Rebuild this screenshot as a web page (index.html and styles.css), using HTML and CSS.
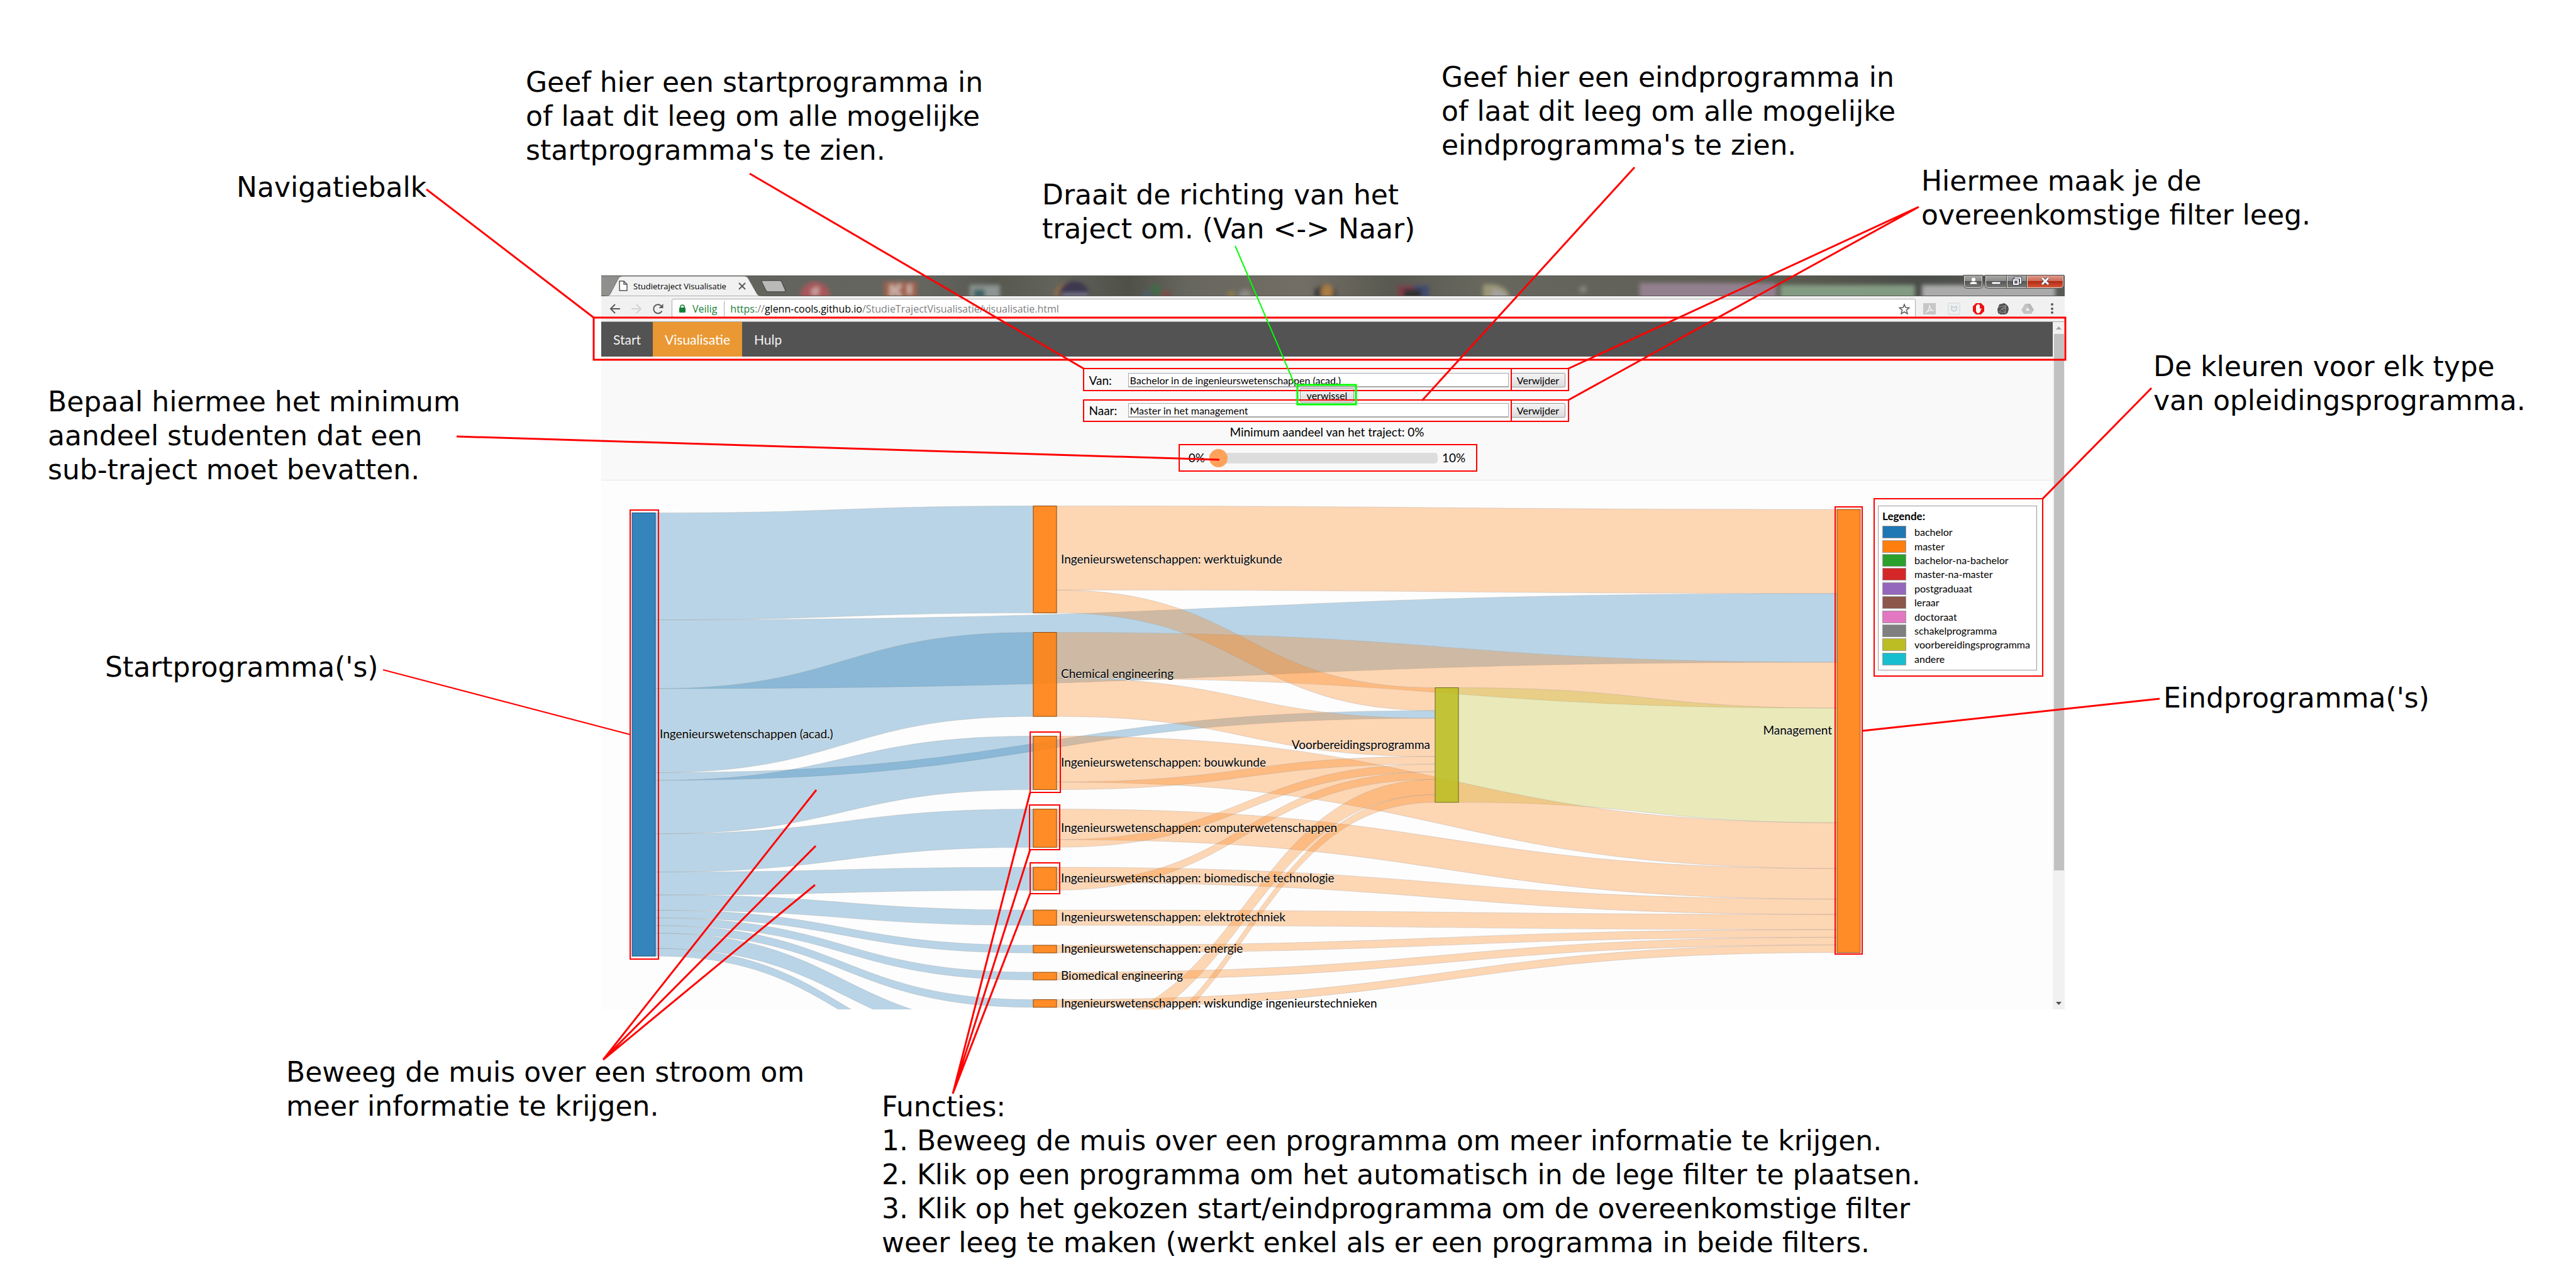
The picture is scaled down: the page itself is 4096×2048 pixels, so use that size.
FILE: index.html
```html
<!DOCTYPE html>
<html lang="nl">
<head>
<meta charset="utf-8">
<title>Studietraject Visualisatie - Hulp</title>
<link rel="stylesheet" href="styles.css">
</head>
<body>
<main class="board">
  <section class="browser">
    <header class="tabstrip">
      <svg class="wallpaper" viewBox="956 438 2327 33" preserveAspectRatio="none" aria-hidden="true">
        <defs>
          <filter id="soft" x="-20%" y="-20%" width="140%" height="140%"><feGaussianBlur stdDeviation="3"/></filter>
          <linearGradient id="desk" x1="0" x2="1" y1="0" y2="0">
            <stop offset="0" stop-color="#90918e"/><stop offset=".03" stop-color="#8a8b88"/><stop offset=".1" stop-color="#63645e"/><stop offset=".22" stop-color="#64655f"/>
            <stop offset=".27" stop-color="#575850"/><stop offset=".31" stop-color="#62635b"/><stop offset=".36" stop-color="#4f5048"/><stop offset=".4" stop-color="#67665e"/>
            <stop offset=".48" stop-color="#736e65"/><stop offset=".54" stop-color="#585950"/><stop offset=".6" stop-color="#67675e"/><stop offset=".7" stop-color="#62625a"/>
            <stop offset=".8" stop-color="#5d5c50"/><stop offset=".9" stop-color="#4a4d49"/><stop offset="1" stop-color="#595b57"/>
          </linearGradient>
        </defs>
        <rect x="956" y="438" width="2327" height="33" fill="url(#desk)"/>
        <g filter="url(#soft)">
          <ellipse cx="1296" cy="472" rx="24" ry="24" fill="#a8575a"/><path d="M1290 460l12-5v14h-12z" fill="#c9a09c"/>
          <rect x="1406" y="448" width="52" height="30" fill="#a0604c"/><path d="M1418 452v20M1432 452l-8 10 8 10M1446 452v16" stroke="#c8b0a4" stroke-width="7" fill="none"/>
          <rect x="1542" y="453" width="48" height="24" fill="#8d9492"/><rect x="1548" y="460" width="18" height="16" fill="#3d6468"/>
          <ellipse cx="1702" cy="470" rx="26" ry="22" fill="#8c6d4c"/><ellipse cx="1708" cy="470" rx="24" ry="23" fill="#3d3850"/><rect x="1688" y="466" width="42" height="8" fill="#777388"/>
          <circle cx="1838" cy="461" r="9" fill="#45694a"/><circle cx="1854" cy="470" r="8" fill="#7d4b45"/><circle cx="1824" cy="470" r="7" fill="#4c5d6d"/>
          <circle cx="1958" cy="469" r="6" fill="#927b46"/><circle cx="1980" cy="470" r="10" fill="#8d8a84"/>
          <path d="M2090 476v-16l16-8 18 8v16z" fill="#3b3c40"/><ellipse cx="2110" cy="464" rx="10" ry="12" fill="#a87b43"/>
          <path d="M2222 478v-24h26v24z" fill="#7d3c4a"/><path d="M2248 478v-24h24v24z" fill="#3f4c70"/><path d="M2232 478v-18h28v18z" fill="#323232"/>
          <path d="M2358 478v-26h16q28 4 26 26z" fill="#9a9676"/><path d="M2372 478v-18q24 0 26 18z" fill="#a4a3a0"/>
          <circle cx="2517" cy="460" r="6" fill="#84847f"/>
          <rect x="2607" y="450" width="218" height="30" fill="#93808f"/>
          <rect x="2831" y="453" width="214" height="30" fill="#849b83"/>
          <rect x="3056" y="453" width="212" height="30" fill="#aaa"/>
        </g>
        <path d="M956 438.500H3283M956 470.500H3283" stroke="#555750" stroke-width="1"/>
      </svg>
      <div class="tab">
        <svg class="tab-shape" viewBox="0 0 250 33" preserveAspectRatio="none" aria-hidden="true"><path d="M0 33c4 0 6-1 8-5L20 5q2-4 6-4H221q4 0 6 4l13 23q2 5 9 5z" fill="#f1f1f1" stroke="#6c6e68"/></svg>
        <svg class="page-icon" viewBox="0 0 14 17" aria-hidden="true"><path d="M1 1h7l5 5v10H1zM8 1v5h5" fill="#fff" stroke="#555" stroke-width="1.500"/></svg>
        <span class="tab-title">Studietraject Visualisatie</span>
        <button class="plain" aria-label="Tabblad sluiten"><svg width="12" height="12" viewBox="0 0 12 12"><path d="M1 1l10 10M11 1L1 11" stroke="#5a5a5a" stroke-width="2"/></svg></button>
      </div>
      <button class="plain newtab" aria-label="Nieuw tabblad"><svg width="42" height="20" viewBox="0 0 42 20"><path d="M3 1h28q2 0 3 2l6 14q0 2-2 2H13q-3 0-4-2L2 3q0-2 1-2z" fill="#b9b9b8" stroke="#4e504a" stroke-width="1.500"/></svg></button>
      <div class="window-buttons">
        <button class="wb user" aria-label="Gebruiker"><svg width="14" height="12" viewBox="0 0 14 12"><circle cx="7" cy="3.500" r="3" fill="#fff"/><path d="M1 11q0-4 4-4h4q4 0 4 4z" fill="#fff" stroke="#444" stroke-width=".5"/></svg></button>
        <button class="wb min" aria-label="Minimaliseren"><svg width="16" height="12" viewBox="0 0 16 12"><path d="M1 7h14v4H1z" fill="#fff" stroke="#445" /></svg></button>
        <button class="wb restore" aria-label="Verkleinen"><svg width="16" height="14" viewBox="0 0 16 14"><path d="M5 2h9v8H5z" fill="none" stroke="#445" stroke-width="4"/><path d="M5 2h9v8H5z" fill="none" stroke="#fff" stroke-width="2"/><path d="M3 5h7v7H3z" fill="#667" stroke="#445" stroke-width="4"/><path d="M3 5h7v7H3z" fill="#667" stroke="#fff" stroke-width="2"/></svg></button>
        <button class="wb close" aria-label="Sluiten"><svg width="16" height="12" viewBox="0 0 16 12"><path d="M3 1l10 10M13 1L3 11" stroke="#5b4a58" stroke-width="5"/><path d="M3 1l10 10M13 1L3 11" stroke="#fff" stroke-width="3"/></svg></button>
      </div>
    </header>

    <div class="toolbar">
      <div class="nav-icons">
        <button class="plain" aria-label="Terug"><svg width="18" height="18" viewBox="0 0 18 18"><path d="M17 9H2M9 2L2 9l7 7" fill="none" stroke="#5a5a5a" stroke-width="2"/></svg></button>
        <button class="plain" aria-label="Vooruit"><svg width="18" height="18" viewBox="0 0 18 18"><path d="M1 9h15M9 2l7 7-7 7" fill="none" stroke="#d3d3d3" stroke-width="2"/></svg></button>
        <button class="plain" aria-label="Vernieuwen"><svg width="18" height="18" viewBox="0 0 18 18"><path d="M15.500 12.500A7 7 0 1 1 14 4" fill="none" stroke="#5a5a5a" stroke-width="2"/><path d="M17.500 1v7h-7z" fill="#5a5a5a"/></svg></button>
      </div>
      <div class="omnibox">
        <svg class="lock" width="12" height="14" viewBox="0 0 12 14" aria-hidden="true"><path d="M3 6V4q0-3 3-3t3 3v2" fill="none" stroke="#188038" stroke-width="1.500"/><rect x="1" y="5" width="10" height="8" rx="1" fill="#188038"/></svg>
        <span class="secure">Veilig</span>
        <span class="url"><span class="green">https</span>://<span class="host">glenn-cools.github.io</span>/StudieTrajectVisualisatie/visualisatie.html</span>
        <svg class="star" width="18" height="18" viewBox="0 0 18 18" aria-hidden="true"><path d="M9 2l2 5 6 .4-4.600 3.700L14 17l-5-3.200L4 17l1.600-5.900L1 7.400 7 7z" fill="none" stroke="#5a5a5a" stroke-width="1.500"/></svg>
      </div>
      <div class="extensions">
        <svg viewBox="0 0 20 20"><path d="M0 1h20v18H0z" fill="#c6c6c6"/><path d="M4 16c4-2 6-7 6-12 0 5 3 9 7 9-4-1-9 0-13 3z" fill="none" stroke="#eee" stroke-width="1.500"/></svg>
        <svg viewBox="0 0 20 20"><rect x="1" y="1" width="18" height="18" rx="1" fill="#eef1f2" stroke="#ccd4d8"/><path d="M6 6l4 2 4-2v6l-4 2-4-2z" fill="none" stroke="#ccd4d8" stroke-width="2"/></svg>
        <svg viewBox="0 0 20 20"><path d="M6 1h8l5 5v8l-5 5H6l-5-5V6z" fill="#e11"/><path d="M6 10V5q1-1 1.500 0V3.500q1-1 1.500 0V3q1-1 1.500 0v1q1-1 1.500 0v7l1.500-2q1.500 0 1 1l-2 5-2 2H8l-2-3z" fill="#fff"/></svg>
        <svg viewBox="0 0 20 20"><path d="M4 3l4-1 4-1 3 2 3 3 1 5-2 6-4 2H6l-4-2-1-6z" fill="#505050"/><path d="M3 7l12-2-7 5 6 6V5M8 10l-4 5 10 1M8 10l7-1" fill="none" stroke="#aaa" stroke-width=".8"/></svg>
        <svg viewBox="0 0 20 20"><path d="M6 2h8l6 10-4 6H4l-4-6z" fill="#c4c4c4"/><path d="M10 8l3 5H7z" fill="#f4f4f4"/><path d="M14 2l6 10h-5L9 2z" fill="#b6b6b6"/></svg>
        <svg viewBox="0 0 20 20"><circle cx="10" cy="3" r="2" fill="#5a5a5a"/><circle cx="10" cy="10" r="2" fill="#5a5a5a"/><circle cx="10" cy="16" r="2" fill="#5a5a5a"/></svg>
      </div>
    </div>

    <div class="viewport">
      <div class="page">
        <nav class="menu">
          <a href="#start">Start</a>
          <a href="#visualisatie" class="active">Visualisatie</a>
          <a href="#hulp">Hulp</a>
        </nav>
        <form class="filters">
          <div class="fields">
            <label for="van">Van:</label>
            <input id="van" type="text" value="Bachelor in de ingenieurswetenschappen (acad.)">
            <button type="button">Verwijder</button>
            <button type="button" class="swap">verwissel</button>
            <label for="naar">Naar:</label>
            <input id="naar" type="text" value="Master in het management">
            <button type="button">Verwijder</button>
          </div>
          <label class="share" for="aandeel">Minimum aandeel van het traject: 0%</label>
          <div class="range">
            <span>0%</span>
            <input id="aandeel" type="range" min="0" max="10" value="0">
            <span>10%</span>
          </div>
        </form>
        <div class="result">
          <svg id="sankey" class="sankey" viewBox="956 764 2017 841" role="img" aria-label="Stroomdiagram van studietrajecten"></svg>
          <aside class="legend">
            <table>
              <caption>Legende:</caption>
              <tbody>
                <tr><td><i class="swatch c1"></i></td><td>bachelor</td></tr>
                <tr><td><i class="swatch c2"></i></td><td>master</td></tr>
                <tr><td><i class="swatch c3"></i></td><td>bachelor-na-bachelor</td></tr>
                <tr><td><i class="swatch c4"></i></td><td>master-na-master</td></tr>
                <tr><td><i class="swatch c5"></i></td><td>postgraduaat</td></tr>
                <tr><td><i class="swatch c6"></i></td><td>leraar</td></tr>
                <tr><td><i class="swatch c7"></i></td><td>doctoraat</td></tr>
                <tr><td><i class="swatch c8"></i></td><td>schakelprogramma</td></tr>
                <tr><td><i class="swatch c9"></i></td><td>voorbereidingsprogramma</td></tr>
                <tr><td><i class="swatch c10"></i></td><td>andere</td></tr>
              </tbody>
            </table>
          </aside>
        </div>
      </div>
      <div class="scrollbar" aria-hidden="true">
        <svg width="19" height="19" viewBox="0 0 19 19"><path d="M5 12l4.500-5 4.500 5z" fill="#a3a3a3"/></svg>
        <div class="thumb"></div>
        <svg class="down" width="19" height="19" viewBox="0 0 19 19"><path d="M5 7l4.500 5 4.500-5z" fill="#505050"/></svg>
      </div>
    </div>
  </section>

  <svg class="pointers" viewBox="0 0 4096 2048" aria-hidden="true">
    <g class="red">
      <rect class="bold" x="944" y="505" width="2340" height="67"/>
      <rect x="1723" y="586" width="771" height="35"/><path d="M2403 586v35"/>
      <rect x="1723" y="636" width="771" height="34"/><path d="M2403 636v34"/>
      <rect x="1875" y="707" width="473" height="42"/>
      <rect x="1002" y="811" width="45" height="714"/>
      <rect x="2918" y="806" width="43" height="711"/>
      <rect x="2980" y="793" width="268" height="282"/>
      <rect x="1638" y="1164" width="48" height="96"/>
      <rect x="1637" y="1280" width="48" height="71"/>
      <rect x="1638" y="1372" width="47" height="49"/>
      <g class="bold">
        <path d="M678 301L944 505M1192 276L1723 586M2599 266L2261 637M2494 586L3051 329L2494 636M3421 617L3248 793M3434 1111L2962 1162"/>
        <path d="M726 694L1939 731"/>
        <path d="M1298 1256L959 1685L1297 1345M959 1685L1296 1407"/>
        <path d="M1638 1260L1515 1739L1638 1351M1515 1739L1638 1421"/>
      </g>
      <path d="M609 1065L1002 1168"/>
    </g>
    <g class="lime">
      <path d="M1964 391L2059 612"/>
      <rect class="bold" x="2063" y="612" width="93" height="31"/>
    </g>
  </svg>

  <p class="note n-nav">Navigatiebalk</p>
  <p class="note n-van">Geef hier een startprogramma in<br>of laat dit leeg om alle mogelijke<br>startprogramma's te zien.</p>
  <p class="note n-swap">Draait de richting van het<br>traject om. (Van &lt;-&gt; Naar)</p>
  <p class="note n-naar">Geef hier een eindprogramma in<br>of laat dit leeg om alle mogelijke<br>eindprogramma's te zien.</p>
  <p class="note n-clear">Hiermee maak je de<br>overeenkomstige filter leeg.</p>
  <p class="note n-colors">De kleuren voor elk type<br>van opleidingsprogramma.</p>
  <p class="note n-min">Bepaal hiermee het minimum<br>aandeel studenten dat een<br>sub-traject moet bevatten.</p>
  <p class="note n-start">Startprogramma('s)</p>
  <p class="note n-end">Eindprogramma('s)</p>
  <p class="note n-flow">Beweeg de muis over een stroom om<br>meer informatie te krijgen.</p>
  <p class="note n-func">Functies:<br>1. Beweeg de muis over een programma om meer informatie te krijgen.<br>2. Klik op een programma om het automatisch in de lege filter te plaatsen.<br>3. Klik op het gekozen start/eindprogramma om de overeenkomstige filter<br>weer leeg te maken (werkt enkel als er een programma in beide filters.</p>
</main>
<script src="sankey.js"></script>
</body>
</html>
```

FILE: styles.css
```css
* { box-sizing: border-box; }
body { margin: 0; background: #fff; color: #000; font-family: Lato, sans-serif; }
button, input { font-family: inherit; }
.board { position: relative; display: grid; grid-template-columns: 956fr 2327fr 813fr; align-items: start; min-height: 2048px; padding-top: 438px; overflow: hidden; }
.browser { grid-column: 2; background: #fdfdfd; min-width: 0; }

.tabstrip { position: relative; display: flex; height: 33px; }
.wallpaper { position: absolute; left: 0; top: 0; width: 100%; height: 100%; }
.tab { position: relative; display: flex; align-items: center; width: 250px; margin-left: 7px; padding: 0 27px 0 21px; font-family: "Open Sans", sans-serif; }
.tab-shape { position: absolute; left: 0; top: 0; width: 100%; height: 100%; }
.page-icon { position: relative; flex: none; width: 14px; height: 17px; }
.tab-title { position: relative; margin-left: 9px; flex: 1; font-size: 13px; white-space: nowrap; }
.plain { position: relative; display: flex; padding: 0; border: 0; background: none; }
.newtab { align-self: center; margin-left: -4px; }
.window-buttons { position: relative; display: flex; margin-left: auto; margin-right: 2px; height: 20px; }
.wb { display: flex; align-items: center; justify-content: center; padding: 0 0 2px; border: 1px solid #ddd; border-top: 0; background: linear-gradient(#a9aaa8, #8c8d8b 45%, #555652 50%, #7b7c79); box-shadow: 0 0 0 1px #4a4b49; }
.user { width: 29px; margin-right: 5px; border-radius: 0 0 5px 5px; }
.min { width: 34px; border-radius: 0 0 0 5px; }
.restore { width: 32px; }
.close { width: 58px; border-radius: 0 0 5px 0; background: linear-gradient(#dd9c8e, #cf6a57 45%, #b02a13 50%, #d5583a); }

.toolbar { display: flex; align-items: center; height: 41px; padding: 0 10px 1px 13px; background: #f1f1f1; border-bottom: 1px solid #a9a9a9; }
.nav-icons { display: flex; gap: 16px; margin-right: 13px; }
.omnibox { flex: 1; display: flex; align-items: center; height: 31px; padding: 0 8px 0 10px; border: 1px solid #aaa; border-radius: 3px; background: #fff; font: 16px "Open Sans", sans-serif; }
.secure { margin-left: 10px; padding-right: 11px; border-right: 1px solid #aaa; color: #188038; line-height: 24px; }
.url { margin-left: 9px; flex: 1; color: #808080; white-space: nowrap; }
.green { color: #188038; }
.host { color: #000; }
.extensions { display: flex; gap: 19px; margin-left: 12px; }
.extensions svg { width: 20px; height: 20px; }

.viewport { display: flex; }
.page { flex: 1; min-width: 0; }
.menu { display: flex; height: 55px; background: #535353; }
.menu a { display: flex; align-items: center; padding: 0 19px; color: #f2f2f2; font-size: 21px; text-decoration: none; }
.menu .active { background: #ea9833; color: #fff; }

.filters { display: flex; flex-direction: column; align-items: center; padding: 24px 0 21px; border-top: 2px solid #fff; border-bottom: 1px solid #e7e7e7; background: #f9f9f9; font-size: 19px; line-height: 22px; }
.fields { display: grid; grid-template-columns: 62px 605px 90px; grid-auto-rows: 23px; row-gap: 1px; align-items: center; }
.fields button { height: 23px; margin-left: 4px; padding: 0; border: 1px solid #999; border-radius: 2px; background: linear-gradient(#f4f4f4, #dcdcdc); font-size: 16px; line-height: 20px; }
.fields .swap { grid-column: 1 / -1; justify-self: center; width: 86px; margin-left: 0; }
.fields input { height: 23px; padding: 0 2px; border: 1px solid #a9a9a9; border-bottom-width: 2px; background: #fff; font-size: 16px; }
.share { margin-top: 12px; }
.range { display: flex; align-items: center; gap: 7px; height: 28px; margin-top: 16px; }
.range input { appearance: none; width: 363px; height: 17px; margin: 0; border-radius: 5px; background: #ddd; }
.range input::-webkit-slider-thumb { appearance: none; width: 29px; height: 29px; border-radius: 50%; background: #fda25a; }

.result { display: grid; grid-template-columns: 1fr 253px; column-gap: 13px; align-items: start; padding-right: 25px; }
.sankey { display: block; width: 100%; overflow: hidden; }
.link { stroke: #999; stroke-opacity: .3; fill-opacity: .3; }
.node { fill-opacity: .9; stroke-width: 1; }
.label { font-size: 19px; fill: #000; text-shadow: 0 1px 0 #fff; }

.legend { margin-top: 40px; height: 262px; padding: 6px 6px; border: 1px solid #999; background: #fff; }
.legend table { height: 224px; border-collapse: collapse; font-size: 16px; line-height: 20px; }
.legend caption { height: 24px; line-height: 20px; font-size: 17px; font-weight: 700; text-align: left; }
.legend td { padding: 0; }
.legend td + td { padding-left: 13px; }
.swatch { display: block; width: 38px; height: 20px; border: 1px solid #999; }
.c1 { background: #1f77b4; } .c2 { background: #ff7f0e; } .c3 { background: #2ca02c; } .c4 { background: #d62728; } .c5 { background: #9467bd; }
.c6 { background: #8c564b; } .c7 { background: #e377c2; } .c8 { background: #7f7f7f; } .c9 { background: #bcbd22; } .c10 { background: #17becf; }

.scrollbar { display: flex; flex-direction: column; width: 19px; background: #f1f1f1; }
.scrollbar .thumb { flex: 1; margin: 0 1px 0 2px; background: #c1c1c1; }
.scrollbar .down { margin-top: 202px; }

.pointers { position: absolute; left: 0; top: 0; width: 100%; fill: none; stroke-width: 2; pointer-events: none; }
.red { stroke: #f00; }
.lime { stroke: #0f0; }
.bold { stroke-width: 3; }

/* explanatory notes, free on the board */
.note { position: absolute; margin: 0; font: 44px/54px "DejaVu Sans", sans-serif; white-space: nowrap; }
.n-nav { left: calc(100% * 376 / 4096); top: 271px; }
.n-van { left: calc(100% * 836 / 4096); top: 104px; }
.n-swap { left: calc(100% * 1657 / 4096); top: 283px; }
.n-naar { left: calc(100% * 2292 / 4096); top: 96px; }
.n-clear { left: calc(100% * 3055 / 4096); top: 261px; }
.n-colors { left: calc(100% * 3424 / 4096); top: 556px; }
.n-min { left: calc(100% * 76 / 4096); top: 612px; }
.n-start { left: calc(100% * 167 / 4096); top: 1034px; }
.n-end { left: calc(100% * 3440 / 4096); top: 1083px; }
.n-flow { left: calc(100% * 455 / 4096); top: 1678px; }
.n-func { left: calc(100% * 1402 / 4096); top: 1733px; }
```

FILE: sankey.js
```js
const NS = 'http://www.w3.org/2000/svg';
const UNIT = 12.15;
const NODE_WIDTH = 37;
const BLUE = '#1f77b4', ORANGE = '#ff7f0e', OLIVE = '#bcbd22';
const W = 'Ingenieurswetenschappen: ';

// x, y: top left corner; size: number of flow units
const nodes = {
  start: { x: 1005, y: 815.5, size: 58, color: BLUE, label: 'Ingenieurswetenschappen (acad.)' },
  wtk: { x: 1643, y: 804.5, size: 14, color: ORANGE, label: W + 'werktuigkunde' },
  chem: { x: 1643, y: 1005.5, size: 11, color: ORANGE, label: 'Chemical engineering' },
  bouw: { x: 1643, y: 1170.5, size: 7, color: ORANGE, label: W + 'bouwkunde' },
  comp: { x: 1643, y: 1286.5, size: 5, color: ORANGE, label: W + 'computerwetenschappen' },
  bmt: { x: 1643, y: 1379, size: 3, color: ORANGE, label: W + 'biomedische technologie' },
  elek: { x: 1643, y: 1447, size: 2, color: ORANGE, label: W + 'elektrotechniek' },
  ener: { x: 1643, y: 1503, size: 1, color: ORANGE, label: W + 'energie' },
  bme: { x: 1643, y: 1546, size: 1, color: ORANGE, label: 'Biomedical engineering' },
  wit: { x: 1643, y: 1589.5, size: 1, color: ORANGE, label: W + 'wiskundige ingenieurstechnieken' },
  mat: { x: 1643, y: 1633, size: 2, color: ORANGE, label: '' },
  nano: { x: 1643, y: 1689, size: 1, color: ORANGE, label: '' },
  voor: { x: 2282, y: 1093.5, size: 15, color: OLIVE, label: 'Voorbereidingsprogramma', left: true },
  man: { x: 2921, y: 810, size: 58, color: ORANGE, label: 'Management', left: true }
};

// listed in the order in which they stack on each node
const links = [
  ['start', 'wtk', 14], ['wtk', 'man', 11], ['start', 'man', 9], ['start', 'chem', 11],
  ['chem', 'man', 6], ['voor', 'man', 15], ['wtk', 'voor', 3], ['start', 'voor', 1],
  ['chem', 'voor', 5], ['start', 'bouw', 7], ['bouw', 'man', 6], ['bouw', 'voor', 1],
  ['start', 'comp', 5], ['comp', 'man', 4], ['comp', 'voor', 1],
  ['start', 'bmt', 3], ['bmt', 'man', 2], ['bmt', 'voor', 1],
  ['start', 'elek', 2], ['elek', 'man', 2], ['start', 'ener', 1], ['ener', 'man', 1],
  ['start', 'bme', 1], ['bme', 'man', 1], ['start', 'wit', 1], ['wit', 'man', 1],
  ['start', 'mat', 2], ['mat', 'voor', 2], ['start', 'nano', 1], ['nano', 'voor', 1]
];

const svg = document.getElementById('sankey');

function add(name, attrs, text) {
  const el = document.createElementNS(NS, name);
  for (const key in attrs) el.setAttribute(key, attrs[key]);
  if (text) el.textContent = text;
  svg.appendChild(el);
}

const used = {};
function take(key, units) {
  const offset = used[key] || 0;
  used[key] = offset + units;
  return offset * UNIT;
}

for (const [from, to, units] of links) {
  const a = nodes[from], b = nodes[to], h = units * UNIT;
  const x0 = a.x + NODE_WIDTH, x1 = b.x, xm = (x0 + x1) / 2;
  const y0 = a.y + take(from + '>', units), y1 = b.y + take('>' + to, units);
  add('path', {
    class: 'link', fill: a.color,
    d: `M${x0} ${y0}C${xm} ${y0} ${xm} ${y1} ${x1} ${y1}V${y1 + h}C${xm} ${y1 + h} ${xm} ${y0 + h} ${x0} ${y0 + h}Z`
  });
}

const EDGE = { [BLUE]: '#15537e', [ORANGE]: '#8a4a10', [OLIVE]: '#6b6c14' };
for (const n of Object.values(nodes)) {
  const h = n.size * UNIT;
  add('rect', { class: 'node', x: n.x, y: n.y, width: NODE_WIDTH, height: h, fill: n.color, stroke: EDGE[n.color] });
}
for (const n of Object.values(nodes)) {
  if (!n.label) continue;
  add('text', {
    class: 'label', x: n.left ? n.x - 8 : n.x + NODE_WIDTH + 7, y: n.y + n.size * UNIT / 2 + 6,
    'text-anchor': n.left ? 'end' : 'start'
  }, n.label);
}
```
